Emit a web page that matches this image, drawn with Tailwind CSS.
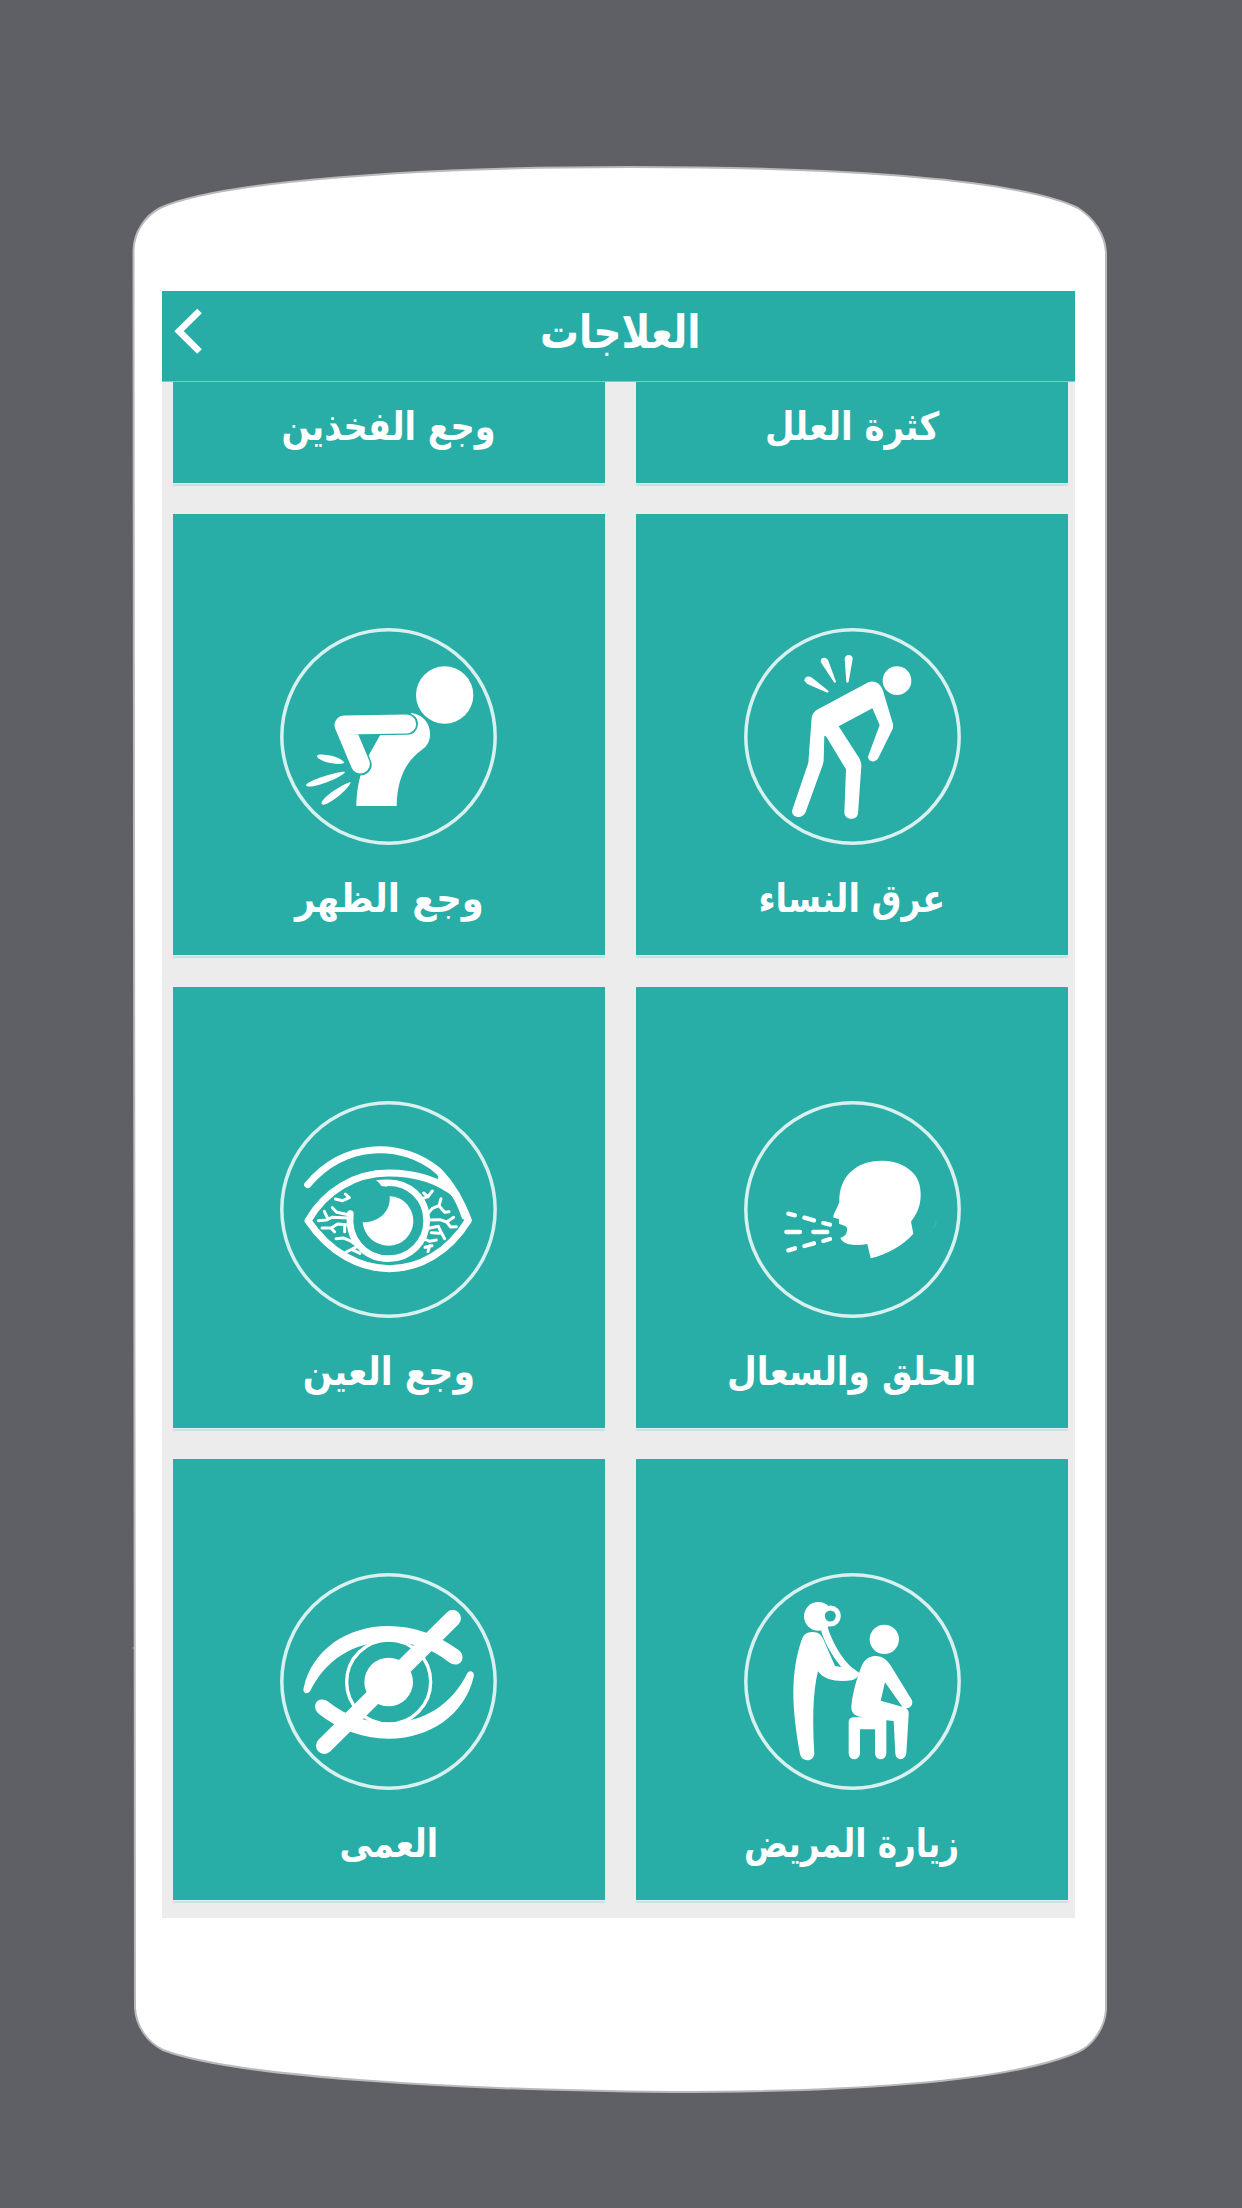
<!DOCTYPE html>
<html lang="ar">
<head>
<meta charset="utf-8">
<title>العلاجات</title>
<script src="https://cdn.jsdelivr.net/npm/@tailwindcss/browser@4"></script>
</head>
<body class="bg-[#5f6065]">
<div class="relative w-[1242px] h-[2208px] overflow-hidden bg-[#5f6065] pl-[162px] pt-[291px] font-['DejaVu_Sans',sans-serif] font-bold text-white">
  <!-- phone body -->
  <svg class="absolute inset-0" width="1242" height="2208" viewBox="0 0 1242 2208">
    <path d="M133.500 250 C134 232 145 216 160 208 C217 182 410 167 630 167 C850 167 1020 180 1078 208 C1094 218 1105 235 1106 252 V2010 C1105 2028 1092 2046 1078 2052 C1018 2078 880 2092 670 2092 C450 2090 230 2076 163 2050 C147 2042 136 2026 135 2008 Z" fill="#fff" stroke="#b9b9bb" stroke-width="2"/>
    <circle cx="133.500" cy="1648" r="1" fill="#a0a0a3"/>
  </svg>

  <main class="relative w-[913px] h-[1626.500px] bg-[#ececec] flex flex-col">
    <header dir="ltr" class="relative h-[91px] shrink-0 bg-[#27ada6] border-b border-[#80c9c4] flex items-center justify-center pl-[3px] pb-[8px]">
      <svg class="absolute left-[12px] top-[16px]" width="30" height="48" viewBox="0 0 30 48"><path d="M25.500 4 L5 24.200 L25.500 44.500" fill="none" stroke="#fff" stroke-width="6.600"/></svg>
      <h1 class="h-[54px] leading-[54px] text-[46px] whitespace-nowrap flex justify-center" dir="rtl"><span class="inline-block scale-x-[0.843]">العلاجات</span></h1>
    </header>

    <section class="grid grid-cols-[432px_432px] gap-x-[31px] gap-y-[31.300px] pl-[11px]">
      <article class="h-[100.700px] bg-[#28ada7] outline-1 outline-[#ececec] shadow-[0_3px_0_#c5e3e0] flex flex-col items-center justify-end pb-[35px]">
        <h2 dir="rtl" class="w-full h-[48px] leading-[54px] text-[39px] whitespace-nowrap flex justify-center"><span class="inline-block scale-x-[0.86]">وجع الفخذين</span></h2>
      </article>
      <article class="h-[100.700px] bg-[#28ada7] outline-1 outline-[#ececec] shadow-[0_3px_0_#c5e3e0] flex flex-col items-center justify-end pb-[35px]">
        <h2 dir="rtl" class="w-full h-[48px] leading-[54px] text-[39px] whitespace-nowrap flex justify-center"><span class="inline-block scale-x-[0.87]">كثرة العلل</span></h2>
      </article>

      <article class="h-[441.300px] bg-[#28ada7] outline-1 outline-[#ececec] shadow-[0_3px_0_#c5e3e0] flex flex-col items-center justify-between pt-[114px] pb-[35px]">
        <svg class="size-[217px] mr-px" viewBox="30 23 651 651" fill="#fff">
          <circle cx="355.500" cy="348.500" r="320" fill="none" stroke="#d8f0ee" stroke-width="10.500"/>
          <circle cx="524" cy="224" r="86"/>
          <path d="M330 345 L425 278 C460 283 482 310 480 345 C479 365 470 379 455 389 C405 425 381 480 380 557 H259 C260 515 265 485 275 455 L298 402 Z"/>
          <path d="M412 311 L222 314 L273 433" fill="none" stroke="#28ada7" stroke-width="64" stroke-linecap="round" stroke-linejoin="round"/>
          <path d="M410 311 L222 314 L271 431" fill="none" stroke="#fff" stroke-width="57" stroke-linecap="round" stroke-linejoin="round"/>
          <path d="M141 407 C144 395 214 408 223 427 C205 438 142 422 141 407 M108 495 C112 480 215 450 225 455 C218 472 113 511 108 495 M155 551 C148 535 232 482 242 486 C236 509 164 565 155 551 Z"/>
        </svg>
        <h2 dir="rtl" class="w-full h-[48px] leading-[54px] text-[39px] whitespace-nowrap flex justify-center"><span class="inline-block scale-x-[0.905]">وجع الظهر</span></h2>
      </article>
      <article class="h-[441.300px] bg-[#28ada7] outline-1 outline-[#ececec] shadow-[0_3px_0_#c5e3e0] flex flex-col items-center justify-between pt-[114px] pb-[35px]">
        <svg class="size-[217px]" viewBox="42 23 651 651" fill="#fff">
          <circle cx="367.500" cy="348.500" r="320" fill="none" stroke="#d8f0ee" stroke-width="10.500"/>
          <circle cx="501" cy="181" r="43"/>
          <path d="M245 292 C247 280 253 273 264 267 L415 186 C435 178 453 191 459 211 L489 312 C490 319 489 324 486 330 L445 413 C434 432 408 422 416 403 L449 314 L427 264 L326 318 L387 412 C392 421 394 428 394 438 L384 580 C380 601 346 601 343 578 L348 447 L288 348 L283 347 L281 420 C280 429 278 435 275 442 L227 575 C217 600 180 591 187 568 L235 427 Z"/>
          <path d="M272 125 C270 110 290 107 295 121 L318 184 C315 189 312 187 310 183 Z M344 116 C344 100 369 100 368 116 L356 184 C353 189 350 188 349 184 Z M223 181 C224 167 237 166 246 172 L295 211 C297 216 293 218 289 216 L232 191 Z"/>
        </svg>
        <h2 dir="rtl" class="w-full h-[48px] leading-[54px] text-[39px] whitespace-nowrap flex justify-center"><span class="inline-block scale-x-[0.858]">عرق النساء</span></h2>
      </article>

      <article class="h-[441.300px] bg-[#28ada7] outline-1 outline-[#ececec] shadow-[0_3px_0_#c5e3e0] flex flex-col items-center justify-between pt-[114px] pb-[35px]">
        <svg class="size-[217px] mr-px" viewBox="30 30 651 651" fill="none" stroke="#fff" stroke-linecap="round" stroke-linejoin="round">
          <circle cx="355.500" cy="355.500" r="320" stroke="#d8f0ee" stroke-width="10.500"/>
          <path d="M113 281 C225 148 400 150 505 240 C550 285 575 335 595 388 C475 581 245 581 114 389 C165 300 255 246 355 246 C430 246 505 266 560 312" stroke-width="21"/>
          <path d="M515 262 C550 295 568 325 585 375" stroke-width="22"/>
          <path d="M340 276 C420 268 470 325 470 390 C470 452 420 503 355 503 C280 503 232 440 241 368" stroke-width="20"/>
          <path d="M318 267 L345 266 L352 287 L336 284 Z" fill="#fff" stroke="none"/>
          <path d="M359 316 C398 316 430 350 430 389 C430 430 397 464 356 464 C315 464 282 434 278 394 C326 395 363 362 359 316 Z" fill="#fff" stroke="none"/>
          <path d="M196 324 L218 329 L238 320 L226 309 M187 350 L200 364 L236 371 M145 389 L170 387 L185 379 L236 381 M163 361 L173 382 M156 411 L183 411 L203 399 L238 402 M183 411 L194 423 M224 401 V422 M198 443 L220 441 L240 449 L262 464 M228 483 L245 475 L270 487 M245 475 L262 466 M487 300 L474 317 L462 321 M461 306 L474 317 M513 323 L507 344 L487 352 L474 368 M507 344 L524 364 L537 362 M478 387 L510 386 L530 393 L551 379 M530 393 L542 408 L559 407 M476 412 L505 406 L512 421 L524 443 M484 425 L510 427 M463 444 L479 451 L499 447 M465 469 L486 464 M474 482 L479 464" stroke-width="9"/>
        </svg>
        <h2 dir="rtl" class="w-full h-[48px] leading-[54px] text-[39px] whitespace-nowrap flex justify-center"><span class="inline-block scale-x-[0.89]">وجع العين</span></h2>
      </article>
      <article class="h-[441.300px] bg-[#28ada7] outline-1 outline-[#ececec] shadow-[0_3px_0_#c5e3e0] flex flex-col items-center justify-between pt-[114px] pb-[35px]">
        <svg class="size-[217px]" viewBox="72 30 651 651" fill="#fff">
          <circle cx="397.500" cy="355.500" r="320" fill="none" stroke="#d8f0ee" stroke-width="10.500"/>
          <path d="M358 333 C356 255 410 209 485 209 C532 209 564 227 584 251 C599 270 602 292 602 312 C602 347 589 372 573 392 L580 428 C550 463 500 490 452 502 L442 459 C410 464 370 464 361 440 C378 436 382 425 381 410 C376 402 365 402 357 398 V384 L341 380 C336 373 352 353 358 333 Z"/>
          <path d="M205 368 L225 373 M253 380 L282 388 M310 396 L330 401 M199 423 H240 M280 423 H322 M205 478 L225 472 M253 465 L282 457 M310 450 L330 444" fill="none" stroke="#fff" stroke-width="13" stroke-linecap="round"/>
          <path d="M648 388 Q650 400 641 411" fill="none" stroke="#54bdb8" stroke-width="2"/>
        </svg>
        <h2 dir="rtl" class="w-full h-[48px] leading-[54px] text-[39px] whitespace-nowrap flex justify-center"><span class="inline-block scale-x-[0.88]">الحلق والسعال</span></h2>
      </article>

      <article class="h-[441.300px] bg-[#28ada7] outline-1 outline-[#ececec] shadow-[0_3px_0_#c5e3e0] flex flex-col items-center justify-between pt-[114px] pb-[35px]">
        <svg class="size-[217px] mr-px" viewBox="30 38 651 651" fill="#fff">
          <circle cx="355.500" cy="363.500" r="320" fill="none" stroke="#d8f0ee" stroke-width="10.500"/>
          <circle cx="356" cy="365" r="126" fill="none" stroke="#fff" stroke-width="10"/>
          <circle cx="356" cy="365" r="73"/>
          <path d="M548 174 L163 556" fill="none" stroke="#fff" stroke-width="50" stroke-linecap="round"/>
          <path d="M101 383 C125 270 230 197 355 197 C430 197 502 222 567 270 C594 295 565 330 533 303 C485 263 420 244 356 244 C250 244 165 300 120 393 C112 404 97 399 101 383 Z"/>
          <path d="M611 349 C585 462 480 535 355 535 C280 535 208 508 146 460 C119 435 148 400 180 428 C228 467 292 487 356 487 C462 487 546 431 591 340 C599 326 615 334 611 349 Z"/>
        </svg>
        <h2 dir="rtl" class="w-full h-[48px] leading-[54px] text-[39px] whitespace-nowrap flex justify-center"><span class="inline-block scale-x-[0.853]">العمى</span></h2>
      </article>
      <article class="h-[441.300px] bg-[#28ada7] outline-1 outline-[#ececec] shadow-[0_3px_0_#c5e3e0] flex flex-col items-center justify-between pt-[114px] pb-[35px]">
        <svg class="size-[217px]" viewBox="42 38 651 651" fill="#fff">
          <circle cx="367.500" cy="363.500" r="320" fill="none" stroke="#d8f0ee" stroke-width="10.500"/>
          <circle cx="265" cy="168" r="43"/>
          <circle cx="301" cy="167" r="24" fill="#28ada7" stroke="#fff" stroke-width="15"/>
          <path d="M246 215 C265 214 275 224 282 241 L315 317 L334 320 C308 289 286 251 273 211 L292 198 C306 244 331 288 361 318 L388 338 C386 348 379 356 365 360 C330 365 285 363 264 333 C247 400 248 490 253 580 C251 605 216 607 210 581 C185 440 180 340 216 235 C222 222 231 216 246 215 Z"/>
          <circle cx="463" cy="237" r="44"/>
          <path d="M434 287 C457 286 473 300 483 317 L546 420 C552 442 526 452 515 436 L465 366 L452 421 L522 441 C533 445 537 452 536 464 L529 579 C526 602 498 602 496 580 L491 482 L469 480 V580 C466 602 438 602 435 580 V507 H390 V580 C386 602 359 602 356 580 V486 C356 475 363 471 374 471 H402 C380 469 363 462 364 440 C367 402 378 359 397 312 C406 297 416 289 434 287 Z"/>
        </svg>
        <h2 dir="rtl" class="w-full h-[48px] leading-[54px] text-[39px] whitespace-nowrap flex justify-center"><span class="inline-block scale-x-[0.837]">زيارة المريض</span></h2>
      </article>
    </section>
  </main>
</div>
</body>
</html>
